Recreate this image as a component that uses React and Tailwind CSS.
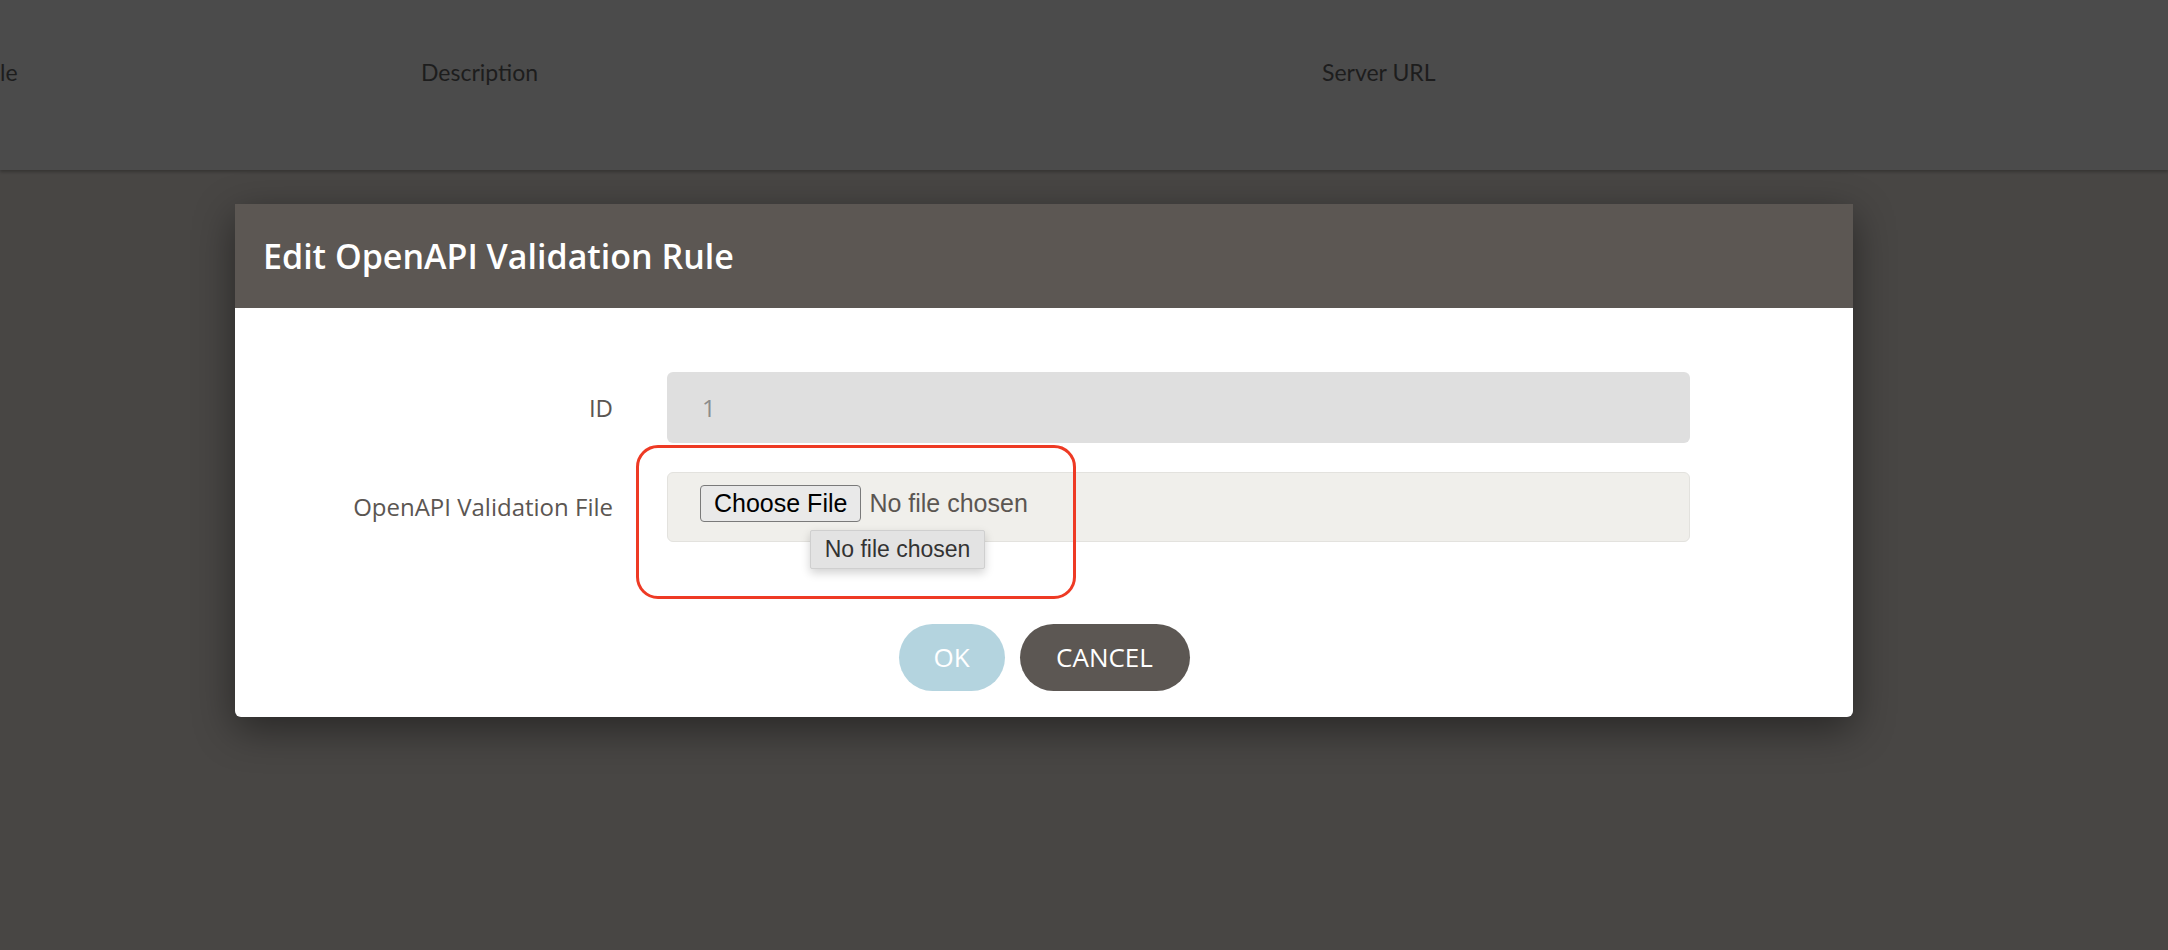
import React from "react";

const FONT = "font-['Open_Sans','Noto_Sans',sans-serif]";

const TopBar = () => (
  <div className="h-[170px] bg-[#4b4b4b] shadow-[0_2px_3px_rgba(0,0,0,0.25)]">
    <div className="flex h-[144px] items-center text-[23px] text-[#1d1d1d] font-['Lato',sans-serif]">
      <span className="w-[421px]">le</span>
      <span className="w-[901px]">Description</span>
      <span>Server URL</span>
    </div>
  </div>
);

const FakeFileInput = () => (
  <div className="relative h-[70px] rounded-[6px] border border-[#e3e2de] bg-[#f0efeb] pl-[32px] flex items-center">
    <div className="flex items-center gap-[8px] -mt-[7px] font-['Liberation_Sans',Arial,sans-serif]">
      <button className="h-[37px] rounded-[4px] border border-[#7a7a7a] bg-[#e9e9e9] px-[13px] text-[25px] leading-none text-black">
        Choose File
      </button>
      <span className="text-[25px] text-[#5b5652]">No file chosen</span>
    </div>

    {/* native tooltip */}
    <div className="absolute left-[142px] top-[57px] h-[39px] w-[175px] rounded-[2px] border border-[#cfcfcf] bg-[#e3e3e3] shadow-[0_4px_10px_rgba(0,0,0,0.18)] flex items-center justify-center font-['Liberation_Sans',Arial,sans-serif] text-[23px] text-[#333]">
      No file chosen
    </div>

    {/* red annotation */}
    <div className="absolute -left-[32px] -top-[28px] h-[154px] w-[440px] rounded-[22px] border-[3px] border-[#ee3a24] pointer-events-none" />
  </div>
);

export default function App() {
  return (
    <div className={`min-h-[950px] bg-[#484644] ${FONT}`}>
      <TopBar />

      <div className="ml-[235px] mt-[34px] w-[1618px] rounded-b-[6px] bg-white shadow-[0_12px_40px_rgba(0,0,0,0.45)]">
        <div className="flex h-[104px] items-center bg-[#5c5753] px-[28px]">
          <h1 className="text-[34px] font-semibold text-white">
            Edit OpenAPI Validation Rule
          </h1>
        </div>

        <div className="pt-[64px] pb-[26px]">
          <div className="grid grid-cols-[378px_1023px] gap-x-[54px] gap-y-[29px] items-center">
            <label className="text-right text-[24px] text-[#5b5652]">ID</label>
            <div className="h-[71px] rounded-[6px] bg-[#dfdfdf] pl-[35px] flex items-center text-[24px] text-[#8c8c8c]">
              1
            </div>

            <label className="text-right text-[24px] text-[#5b5652]">OpenAPI Validation File</label>
            <FakeFileInput />
          </div>

          <div className="mt-[82px] flex justify-center gap-[15px]">
            <button className="h-[67px] w-[106px] rounded-full bg-[#b4d4df] text-[26px] font-medium text-white">
              OK
            </button>
            <button className="h-[67px] w-[170px] rounded-full bg-[#5c5753] text-[26px] font-medium text-white">
              CANCEL
            </button>
          </div>
        </div>
      </div>
    </div>
  );
}
